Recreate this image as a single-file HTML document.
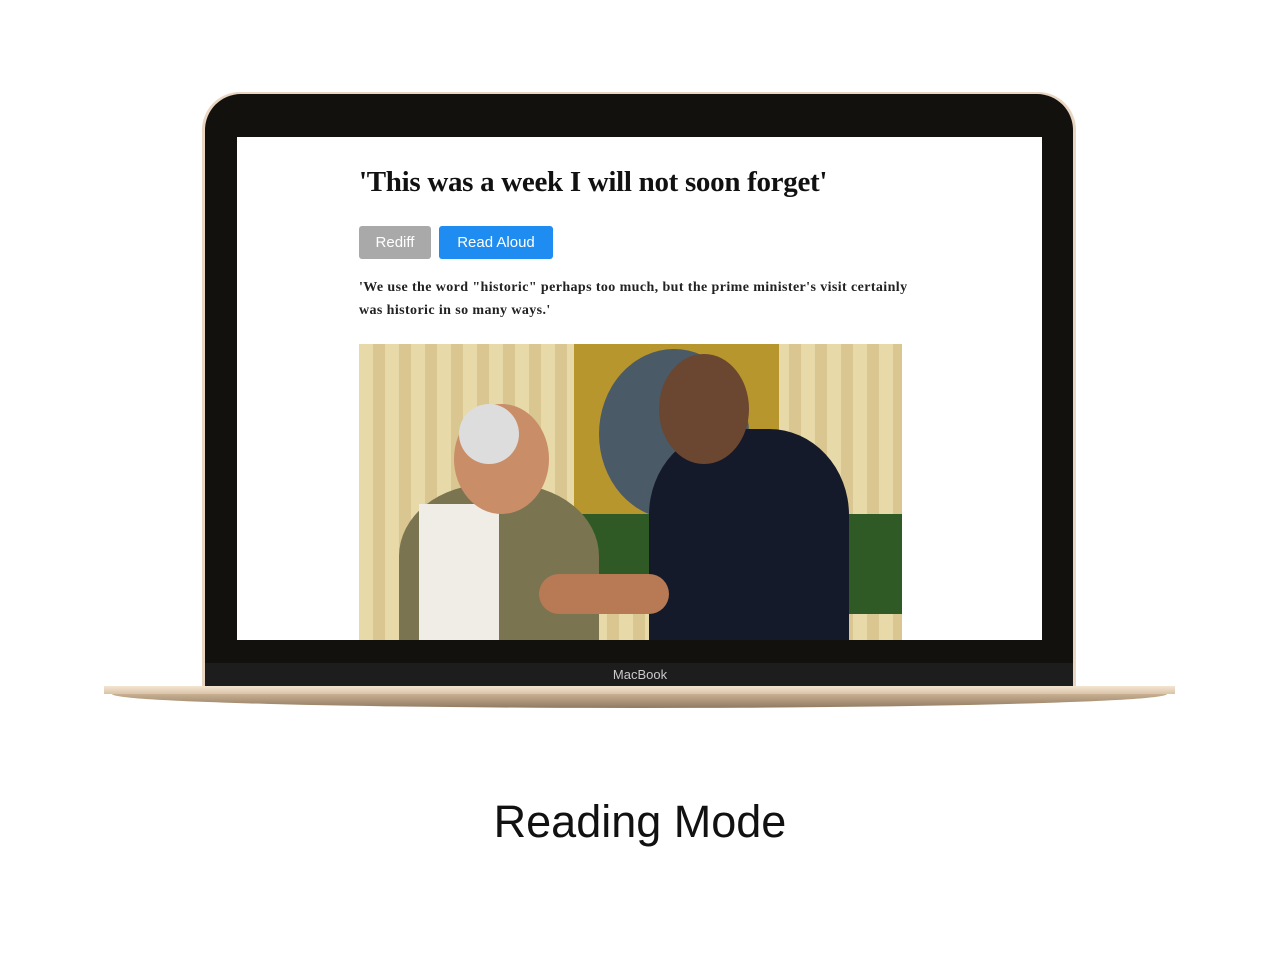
<!DOCTYPE html><html><head><style>
body{margin:0;width:1280px;height:956px;background:#fff;position:relative;overflow:hidden;font-family:"Liberation Sans",sans-serif}
.a{position:absolute}
</style></head><body>
<div class="a" style="left:202px;top:92px;width:874px;height:600px;border-radius:38px 38px 0 0;background:#e9d6c2"></div>
<div class="a" style="left:205px;top:94px;width:868px;height:596px;border-radius:36px 36px 0 0;background:#13110e"></div>
<div class="a" style="left:205px;top:663px;width:868px;height:24px;background:#1d1d1d"></div>
<div class="a" style="left:560px;top:667px;width:160px;text-align:center;color:#c9c9c9;font-size:13px">MacBook</div>
<div class="a" style="left:104px;top:686px;width:1071px;height:8px;background:linear-gradient(#f4e5d2,#d9c3a8)"></div>
<div class="a" style="left:112px;top:694px;width:1055px;height:14px;border-radius:0 0 50% 50%/0 0 100% 100%;background:linear-gradient(#c9b091,#8f7a62)"></div>
<div class="a" style="left:237px;top:137px;width:805px;height:503px;background:#fff;overflow:hidden">
<div class="a" style="left:122px;top:29px;font-family:'Liberation Serif',serif;font-weight:bold;font-size:29px;letter-spacing:-0.3px;color:#111">'This was a week I will not soon forget'</div>
<div class="a" style="left:122px;top:89px;width:72px;height:33px;background:#a9a9a9;border-radius:3px;color:#fff;font-size:15px;line-height:33px;text-align:center">Rediff</div>
<div class="a" style="left:202px;top:89px;width:114px;height:33px;background:#1e8cf0;border-radius:3px;color:#fff;font-size:15px;line-height:33px;text-align:center">Read Aloud</div>
<div class="a" style="left:122px;top:139px;width:550px;font-family:'Liberation Serif',serif;font-weight:bold;font-size:14px;letter-spacing:0.4px;line-height:23px;color:#222">'We use the word "historic" perhaps too much, but the prime minister's visit certainly was historic in so many ways.'</div>
<div class="a" style="left:122px;top:207px;width:543px;height:296px;background:repeating-linear-gradient(90deg,#e8d9a8 0 14px,#d9c690 14px 26px);overflow:hidden">
<div class="a" style="left:215px;top:0;width:205px;height:190px;background:#b8962e"></div>
<div class="a" style="left:240px;top:5px;width:150px;height:170px;border-radius:50%;background:#4a5a66"></div>
<div class="a" style="left:170px;top:170px;width:373px;height:100px;background:#2f5a25"></div>
<div class="a" style="left:40px;top:140px;width:200px;height:160px;border-radius:45% 45% 0 0;background:#7a7450"></div>
<div class="a" style="left:60px;top:160px;width:80px;height:140px;background:#f0ece6"></div>
<div class="a" style="left:95px;top:60px;width:95px;height:110px;border-radius:50%;background:#c98d68"></div>
<div class="a" style="left:100px;top:60px;width:60px;height:60px;border-radius:50%;background:#ddd"></div>
<div class="a" style="left:290px;top:85px;width:200px;height:215px;border-radius:40% 40% 0 0;background:#151a2a"></div>
<div class="a" style="left:300px;top:10px;width:90px;height:110px;border-radius:50%;background:#6b4630"></div>
<div class="a" style="left:180px;top:230px;width:130px;height:40px;border-radius:20px;background:#b77a55"></div>
</div>
</div>
<div class="a" style="left:0;top:796px;width:1280px;text-align:center;font-size:45px;color:#111">Reading Mode</div>
</body></html>
